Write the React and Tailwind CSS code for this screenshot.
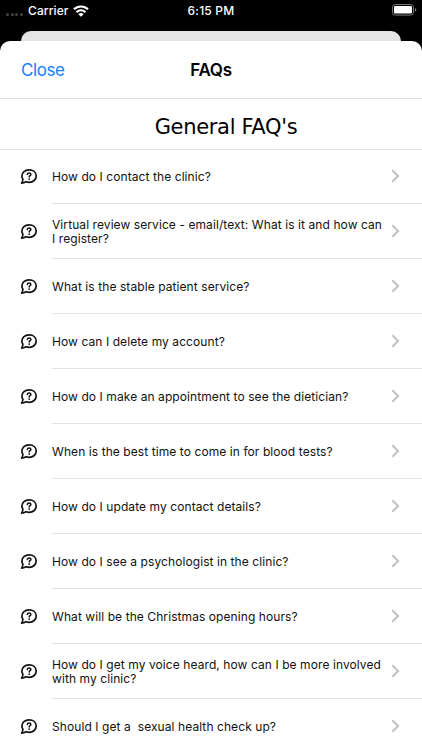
const questions = [
  { id: 1, lines: ['How do I contact the clinic?'] },
  { id: 2, lines: ['Virtual review service - email/text: What is it and how can', 'I register?'] },
  { id: 3, lines: ['What is the stable patient service?'] },
  { id: 4, lines: ['How can I delete my account?'] },
  { id: 5, lines: ['How do I make an appointment to see the dietician?'] },
  { id: 6, lines: ['When is the best time to come in for blood tests?'] },
  { id: 7, lines: ['How do I update my contact details?'] },
  { id: 8, lines: ['How do I see a psychologist in the clinic?'] },
  { id: 9, lines: ['What will be the Christmas opening hours?'] },
  { id: 10, lines: ['How do I get my voice heard, how can I be more involved', 'with my clinic?'] },
  { id: 11, lines: ['Should I get a  sexual health check up?'] },
]

function WifiIcon() {
  return (
    <svg width="16" height="12" viewBox="0 0 16 12" fill="none" stroke="#fff" strokeWidth="2.1">
      <path d="M1 4.3a10 10 0 0 1 14 0" />
      <path d="M3.5 7.2a6.3 6.3 0 0 1 9 0" />
      <path d="M8 11.8 5.4 9.2a3.7 3.7 0 0 1 5.2 0Z" fill="#fff" stroke="none" />
    </svg>
  )
}

function BatteryIcon() {
  return (
    <svg width="25" height="12" viewBox="0 0 25 12" fill="none">
      <rect x="0.5" y="0.5" width="21" height="10.6" rx="2.8" stroke="#777" />
      <rect x="2" y="2" width="18" height="7.6" rx="1.4" fill="#fff" />
      <path d="M23 4v3.8c.8-.3 1.3-1 1.3-1.900S23.800 4.300 23 4Z" fill="#777" />
    </svg>
  )
}

function QuestionBubble() {
  return (
    <svg className="shrink-0" width="18" height="18" viewBox="0 0 18 18" fill="none" stroke="#111" strokeLinecap="round" strokeLinejoin="round">
      <path d="M2.9 11.2A5.600 5.600 0 0 1 1.900 8C1.900 4.400 5 1.900 9.100 1.900s7.100 2.500 7.100 6.100-3 6.300-7.100 6.300c-1.200 0-2.200-.2-3.200-.5-1.200.8-2.600 1.300-4.300 1.400.7-1 1.200-2.400 1.300-4Z" strokeWidth="1.7" />
      <path d="M7.3 6.500c.1-.9.8-1.500 1.800-1.500s1.800.6 1.800 1.500c0 1.200-1.700 1.200-1.700 2.400" strokeWidth="1.5" />
      <circle cx="9.200" cy="11.100" r="0.950" fill="#111" stroke="none" />
    </svg>
  )
}

function Chevron() {
  return (
    <svg className="shrink-0" width="9" height="14" viewBox="0 0 9 14" fill="none" stroke="#c2c2c4" strokeWidth="2.1">
      <path d="m1.3 1.200 5.800 5.800-5.800 5.800" />
    </svg>
  )
}

function StatusBar() {
  return (
    <div className="grid h-[31px] shrink-0 grid-cols-3 items-start pt-[3px] text-[12px] leading-4 font-medium text-white">
      <div className="flex items-center pl-[6px]">
        <div className="flex gap-[1.5px] pt-[7px]">
          {[0, 1, 2, 3].map((dot) => (
            <span key={dot} className="size-[3px] rounded-full bg-[#444]" />
          ))}
        </div>
        <span className="ml-[5.5px] mr-[4px] w-[41px] tracking-[0.1px]">Carrier</span>
        <WifiIcon />
      </div>
      <div className="text-center tracking-[0.2px]">6:15 PM</div>
      <div className="flex justify-end pt-px pr-[5px]">
        <BatteryIcon />
      </div>
    </div>
  )
}

function QuestionRow({ lines }) {
  return (
    <li className="flex h-[55px] items-stretch pl-5">
      <div className="flex w-8 shrink-0 items-center">
        <QuestionBubble />
      </div>
      <div className="flex flex-1 items-center justify-between border-b border-[#e3e3e4] pr-[22px]">
        <div className="pt-[2px] text-[12px] leading-[14px] tracking-[0.08px] whitespace-pre text-[#111]">
          {lines.map((line) => (
            <div key={line}>{line}</div>
          ))}
        </div>
        <Chevron />
      </div>
    </li>
  )
}

export default function App() {
  return (
    <div className="flex h-[750px] w-[422px] flex-col overflow-hidden bg-black font-['Inter',sans-serif]">
      <StatusBar />
      <div className="mx-[21px] h-[10px] shrink-0 rounded-t-[10px] bg-[#e5e5e5]" />
      <main className="flex-1 overflow-hidden rounded-t-[10px] bg-white">
        <header className="grid h-[58px] grid-cols-3 items-center border-b border-[#dededf] px-[21px] pt-[3px] text-[17px]">
          <button className="text-left tracking-[-0.4px] text-[#147efb]">Close</button>
          <h1 className="text-center font-semibold tracking-[-0.3px] text-black">FAQs</h1>
        </header>
        <h2 className="flex h-[51px] items-center justify-center border-b border-[#e3e3e4] pt-[7px] pl-[30px] font-['DejaVu_Sans',sans-serif] text-[21px] tracking-[-0.32px] text-black">
          General FAQ's
        </h2>
        <ul className="-mt-px">
          {questions.map((question) => (
            <QuestionRow key={question.id} lines={question.lines} />
          ))}
        </ul>
      </main>
    </div>
  )
}
